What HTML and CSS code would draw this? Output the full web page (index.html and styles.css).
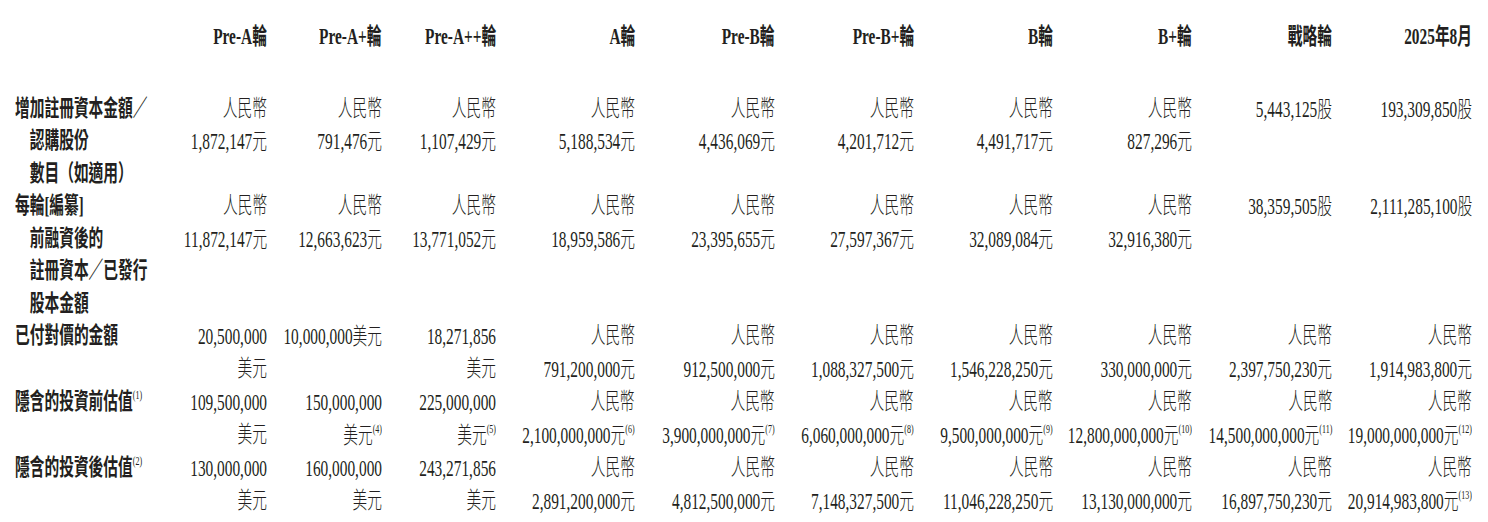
FILE: index.html
```html
<!DOCTYPE html>
<html lang="zh-Hant">
<head>
<meta charset="utf-8">
<title>融資輪次</title>
<link rel="stylesheet" href="styles.css">
</head>
<body>
<div class="fin">
  <div class="corner"></div>
  <div class="hd">Pre-A<span class="u">輪</span></div>
  <div class="hd">Pre-A+<span class="u">輪</span></div>
  <div class="hd">Pre-A++<span class="u">輪</span></div>
  <div class="hd">A<span class="u">輪</span></div>
  <div class="hd">Pre-B<span class="u">輪</span></div>
  <div class="hd">Pre-B+<span class="u">輪</span></div>
  <div class="hd">B<span class="u">輪</span></div>
  <div class="hd">B+<span class="u">輪</span></div>
  <div class="hd"><span class="u">戰略輪</span></div>
  <div class="hd">2025<span class="u">年</span>8<span class="u">月</span></div>

  <div class="lab"><div>增加註冊資本金額／</div><div class="sub">認購股份</div><div class="sub">數目（如適用）</div></div>
  <div class="val"><div class="u">人民幣</div><div>1,872,147<span class="u">元</span></div></div>
  <div class="val"><div class="u">人民幣</div><div>791,476<span class="u">元</span></div></div>
  <div class="val"><div class="u">人民幣</div><div>1,107,429<span class="u">元</span></div></div>
  <div class="val"><div class="u">人民幣</div><div>5,188,534<span class="u">元</span></div></div>
  <div class="val"><div class="u">人民幣</div><div>4,436,069<span class="u">元</span></div></div>
  <div class="val"><div class="u">人民幣</div><div>4,201,712<span class="u">元</span></div></div>
  <div class="val"><div class="u">人民幣</div><div>4,491,717<span class="u">元</span></div></div>
  <div class="val"><div class="u">人民幣</div><div>827,296<span class="u">元</span></div></div>
  <div class="val"><div>5,443,125<span class="u">股</span></div></div>
  <div class="val"><div>193,309,850<span class="u">股</span></div></div>

  <div class="lab"><div>每輪[編纂]</div><div class="sub">前融資後的</div><div class="sub">註冊資本／已發行</div><div class="sub">股本金額</div></div>
  <div class="val"><div class="u">人民幣</div><div>11,872,147<span class="u">元</span></div></div>
  <div class="val"><div class="u">人民幣</div><div>12,663,623<span class="u">元</span></div></div>
  <div class="val"><div class="u">人民幣</div><div>13,771,052<span class="u">元</span></div></div>
  <div class="val"><div class="u">人民幣</div><div>18,959,586<span class="u">元</span></div></div>
  <div class="val"><div class="u">人民幣</div><div>23,395,655<span class="u">元</span></div></div>
  <div class="val"><div class="u">人民幣</div><div>27,597,367<span class="u">元</span></div></div>
  <div class="val"><div class="u">人民幣</div><div>32,089,084<span class="u">元</span></div></div>
  <div class="val"><div class="u">人民幣</div><div>32,916,380<span class="u">元</span></div></div>
  <div class="val"><div>38,359,505<span class="u">股</span></div></div>
  <div class="val"><div>2,111,285,100<span class="u">股</span></div></div>

  <div class="lab"><div>已付對價的金額</div></div>
  <div class="val"><div>20,500,000</div><div class="u">美元</div></div>
  <div class="val"><div>10,000,000<span class="u">美元</span></div></div>
  <div class="val"><div>18,271,856</div><div class="u">美元</div></div>
  <div class="val"><div class="u">人民幣</div><div>791,200,000<span class="u">元</span></div></div>
  <div class="val"><div class="u">人民幣</div><div>912,500,000<span class="u">元</span></div></div>
  <div class="val"><div class="u">人民幣</div><div>1,088,327,500<span class="u">元</span></div></div>
  <div class="val"><div class="u">人民幣</div><div>1,546,228,250<span class="u">元</span></div></div>
  <div class="val"><div class="u">人民幣</div><div>330,000,000<span class="u">元</span></div></div>
  <div class="val"><div class="u">人民幣</div><div>2,397,750,230<span class="u">元</span></div></div>
  <div class="val"><div class="u">人民幣</div><div>1,914,983,800<span class="u">元</span></div></div>

  <div class="lab"><div>隱含的投資前估值<sup>(1)</sup></div></div>
  <div class="val"><div>109,500,000</div><div class="u">美元</div></div>
  <div class="val"><div>150,000,000</div><div><span class="u">美元</span><sup>(4)</sup></div></div>
  <div class="val"><div>225,000,000</div><div><span class="u">美元</span><sup>(5)</sup></div></div>
  <div class="val"><div class="u">人民幣</div><div>2,100,000,000<span class="u">元</span><sup>(6)</sup></div></div>
  <div class="val"><div class="u">人民幣</div><div>3,900,000,000<span class="u">元</span><sup>(7)</sup></div></div>
  <div class="val"><div class="u">人民幣</div><div>6,060,000,000<span class="u">元</span><sup>(8)</sup></div></div>
  <div class="val"><div class="u">人民幣</div><div>9,500,000,000<span class="u">元</span><sup>(9)</sup></div></div>
  <div class="val"><div class="u">人民幣</div><div>12,800,000,000<span class="u">元</span><sup>(10)</sup></div></div>
  <div class="val"><div class="u">人民幣</div><div>14,500,000,000<span class="u">元</span><sup>(11)</sup></div></div>
  <div class="val"><div class="u">人民幣</div><div>19,000,000,000<span class="u">元</span><sup>(12)</sup></div></div>

  <div class="lab"><div>隱含的投資後估值<sup>(2)</sup></div></div>
  <div class="val"><div>130,000,000</div><div class="u">美元</div></div>
  <div class="val"><div>160,000,000</div><div class="u">美元</div></div>
  <div class="val"><div>243,271,856</div><div class="u">美元</div></div>
  <div class="val"><div class="u">人民幣</div><div>2,891,200,000<span class="u">元</span></div></div>
  <div class="val"><div class="u">人民幣</div><div>4,812,500,000<span class="u">元</span></div></div>
  <div class="val"><div class="u">人民幣</div><div>7,148,327,500<span class="u">元</span></div></div>
  <div class="val"><div class="u">人民幣</div><div>11,046,228,250<span class="u">元</span></div></div>
  <div class="val"><div class="u">人民幣</div><div>13,130,000,000<span class="u">元</span></div></div>
  <div class="val"><div class="u">人民幣</div><div>16,897,750,230<span class="u">元</span></div></div>
  <div class="val"><div class="u">人民幣</div><div>20,914,983,800<span class="u">元</span><sup>(13)</sup></div></div>
</div>
</body>
</html>
```

FILE: styles.css
```css
:root {
  --sx: 0.64;
}

html, body {
  margin: 0;
  padding: 0;
  background: #ffffff;
}

.fin {
  display: grid;
  grid-template-columns: 145px 107px 115px 114px 139px 140px 139px 139px 139px 140px 140px;
  padding: 19.5px 0 0 15px;
  color: #231f20;
  font-family: "Liberation Serif", "Noto Sans CJK TC", serif;
  font-size: 24px;
  line-height: 32.5px;
}

.hd,
.val {
  justify-self: end;
  width: max-content;
  text-align: right;
  white-space: nowrap;
  transform: scaleX(var(--sx));
  transform-origin: 100% 0;
}

.hd {
  font-weight: 700;
  padding-bottom: 39.5px;
}

.val {
  font-weight: 300;
}

.u {
  font-size: 23px;
}

.lab {
  justify-self: start;
  width: max-content;
  white-space: nowrap;
  font-weight: 700;
  font-size: 23px;
  transform: scaleX(var(--sx));
  transform-origin: 0 0;
}

.lab .sub {
  padding-left: 1em;
}

sup {
  font-size: 12.5px;
  line-height: 0;
  vertical-align: 10.5px;
  font-weight: 400;
}
```
